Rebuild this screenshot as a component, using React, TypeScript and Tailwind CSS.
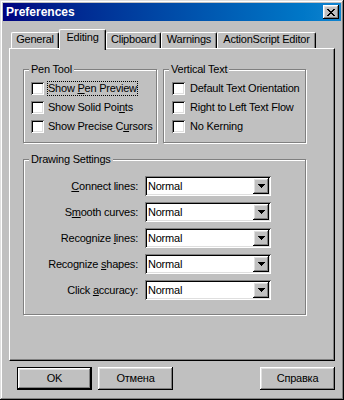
import * as React from 'react';

const raised =
  'shadow-[inset_-1px_-1px_#000,inset_1px_1px_#fff,inset_-2px_-2px_#808080,inset_2px_2px_#dfdfdf]';
const sunken =
  'shadow-[inset_1px_1px_#808080,inset_-1px_-1px_#fff,inset_2px_2px_#000,inset_-2px_-2px_#dfdfdf]';

function CloseGlyph() {
  const rows: [number, number][][] = [
    [[0, 2], [6, 2]],
    [[1, 2], [5, 2]],
    [[2, 4]],
    [[3, 2]],
    [[2, 4]],
    [[1, 2], [5, 2]],
    [[0, 2], [6, 2]],
  ];
  return (
    <svg width="8" height="7" viewBox="0 0 8 7" shapeRendering="crispEdges">
      {rows.map((row, y) =>
        row.map(([x, w]) => <rect key={`${y}-${x}`} x={x} y={y} width={w} height={1} fill="#000" />),
      )}
    </svg>
  );
}

function DownArrow() {
  return (
    <svg width="7" height="4" viewBox="0 0 7 4" shapeRendering="crispEdges">
      <rect x="0" y="0" width="7" height="1" fill="#000" />
      <rect x="1" y="1" width="5" height="1" fill="#000" />
      <rect x="2" y="2" width="3" height="1" fill="#000" />
      <rect x="3" y="3" width="1" height="1" fill="#000" />
    </svg>
  );
}

function Mnemonic({ text, at }: { text: string; at: number }) {
  if (at < 0) return <>{text}</>;
  return (
    <>
      {text.slice(0, at)}
      <span className="underline underline-offset-[1px]">{text[at]}</span>
      {text.slice(at + 1)}
    </>
  );
}

function Checkbox({
  label,
  at = -1,
  focused = false,
  gap = 'ml-[3px]',
}: {
  label: string;
  at?: number;
  focused?: boolean;
  gap?: string;
}) {
  return (
    <div className="flex h-[13px] items-center">
      <div className={`h-[13px] w-[13px] shrink-0 bg-white ${sunken}`} />
      <span
        className={`${gap} whitespace-nowrap border border-dotted leading-[13px] ${
          focused ? 'border-black' : 'border-transparent'
        }`}
      >
        <Mnemonic text={label} at={at} />
      </span>
    </div>
  );
}

function GroupBox({
  title,
  className,
  children,
}: {
  title: string;
  className: string;
  children: React.ReactNode;
}) {
  return (
    <div
      className={`relative border border-[#808080] shadow-[inset_1px_1px_#fff,1px_1px_#fff] ${className}`}
    >
      <span className="absolute left-[5px] top-[-7px] bg-[#c0c0c0] px-[2px] leading-[13px]">
        {title}
      </span>
      {children}
    </div>
  );
}

function Dropdown() {
  return (
    <div className={`flex h-[20px] w-[126px] items-center bg-white p-[2px] ${sunken}`}>
      <span className="flex-1 pl-[1px] leading-[13px]">Normal</span>
      <div className={`flex h-[16px] w-[16px] items-center justify-center bg-[#c0c0c0] ${raised}`}>
        <DownArrow />
      </div>
    </div>
  );
}

function Button({ label, isDefault = false }: { label: string; isDefault?: boolean }) {
  if (isDefault) {
    return (
      <div className="h-[23px] w-[75px] border border-black">
        <div className={`flex h-full w-full items-center justify-center ${raised}`}>{label}</div>
      </div>
    );
  }
  return (
    <div className={`flex h-[23px] w-[75px] items-center justify-center ${raised}`}>{label}</div>
  );
}

const tabs = [
  { label: 'General', width: 'w-[48px]' },
  { label: 'Editing', width: 'w-[47px]', active: true },
  { label: 'Clipboard', width: 'w-[55px]' },
  { label: 'Warnings', width: 'w-[56px]' },
  { label: 'ActionScript Editor', width: 'w-[99px]' },
];

const drawingRows = [
  { label: 'Connect lines:', at: 0 },
  { label: 'Smooth curves:', at: 1 },
  { label: 'Recognize lines:', at: 10 },
  { label: 'Recognize shapes:', at: 10 },
  { label: 'Click accuracy:', at: 6 },
];

export default function App() {
  return (
    <div className="flex h-[400px] w-[344px] flex-col bg-[#c0c0c0] p-[3px] font-['Liberation_Sans',Arial,sans-serif] text-[11px] tracking-[-0.22px] text-black shadow-[inset_-1px_-1px_#000,inset_1px_1px_#dfdfdf,inset_-2px_-2px_#808080,inset_2px_2px_#fff]">
      <div className="flex h-[18px] items-center justify-between bg-linear-to-r from-[#000080] to-[#1084d0] pl-[3px] pr-[2px]">
        <span className="text-[12px] font-bold leading-[14px] tracking-normal text-white">Preferences</span>
        <div className={`flex h-[14px] w-[16px] items-center justify-center bg-[#c0c0c0] ${raised}`}>
          <CloseGlyph />
        </div>
      </div>

      <div className="mx-[6px] mt-[8px] flex flex-col">
        <div className="flex items-end pl-[2px]">
          {tabs.map((tab) =>
            tab.active ? (
              <div
                key={tab.label}
                className={`relative z-10 -mb-[2px] flex h-[21px] ${tab.width} justify-center rounded-t-[2px] border-l border-r border-t border-l-white border-r-black border-t-white bg-[#c0c0c0] pt-[1px] leading-[13px] shadow-[inset_-1px_0_#808080]`}
              >
                {tab.label}
              </div>
            ) : (
              <div
                key={tab.label}
                className={`flex h-[16px] ${tab.width} justify-center rounded-t-[2px] border-l border-r border-t border-l-white border-r-black border-t-white leading-[13px] shadow-[inset_-1px_0_#808080]`}
              >
                {tab.label}
              </div>
            ),
          )}
        </div>

        <div className="flex h-[313px] flex-col border border-b-black border-l-white border-r-black border-t-white pl-[13px] pt-[20px] shadow-[inset_-1px_-1px_#808080]">
          <div className="flex gap-[6px]">
            <GroupBox title="Pen Tool" className="h-[74px] w-[134px] pl-[7px] pt-[12px]">
              <div className="flex flex-col gap-[6px]">
                <Checkbox label="Show Pen Preview" at={5} focused />
                <Checkbox label="Show Solid Points" at={14} />
                <Checkbox label="Show Precise Cursors" at={14} />
              </div>
            </GroupBox>
            <GroupBox title="Vertical Text" className="h-[74px] w-[143px] pl-[8px] pt-[12px]">
              <div className="flex flex-col gap-[6px]">
                <Checkbox label="Default Text Orientation" gap="ml-[4px]" />
                <Checkbox label="Right to Left Text Flow" gap="ml-[4px]" />
                <Checkbox label="No Kerning" gap="ml-[4px]" />
              </div>
            </GroupBox>
          </div>

          <GroupBox title="Drawing Settings" className="mt-[16px] h-[156px] w-[283px] pt-[16px]">
            <div className="flex flex-col gap-[6px]">
              {drawingRows.map((row) => (
                <div key={row.label} className="flex items-center">
                  <span className="w-[114px] text-right leading-[13px]">
                    <Mnemonic text={row.label} at={row.at} />
                  </span>
                  <div className="ml-[7px]">
                    <Dropdown />
                  </div>
                </div>
              ))}
            </div>
          </GroupBox>
        </div>
      </div>

      <div className="mt-[6px] flex pl-[14px] pr-[6px]">
        <Button label="OK" isDefault />
        <div className="ml-[6px]">
          <Button label="Отмена" />
        </div>
        <div className="ml-auto">
          <Button label="Справка" />
        </div>
      </div>
    </div>
  );
}
